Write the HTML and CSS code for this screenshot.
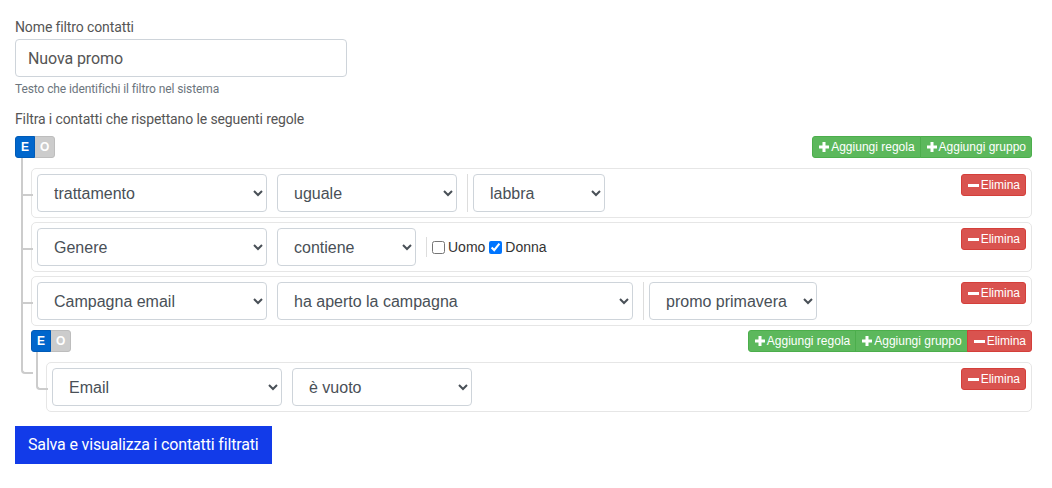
FILE: index.html
```html
<!DOCTYPE html>
<html lang="it">
<head>
<meta charset="utf-8">
<title>Filtro contatti</title>
<link rel="stylesheet" href="styles.css">
</head>
<body>
<div class="page">
  <div class="field">
    <label class="label" for="nome">Nome filtro contatti</label>
    <input id="nome" class="text-input" type="text" value="Nuova promo">
    <div class="help">Testo che identifichi il filtro nel sistema</div>
  </div>
  <div class="label label-rules">Filtra i contatti che rispettano le seguenti regole</div>

  <div class="group">
    <div class="group-header">
      <div class="btn-group">
        <button class="btn btn-cond btn-and">E</button><button class="btn btn-cond btn-or">O</button>
      </div>
      <div class="btn-group">
        <button class="btn btn-success"><svg class="ico-plus" viewBox="0 0 10 10"><rect x="3.5" y="0" width="3" height="10"/><rect x="0" y="3.5" width="10" height="3"/></svg>Aggiungi regola</button><button class="btn btn-success"><svg class="ico-plus" viewBox="0 0 10 10"><rect x="3.5" y="0" width="3" height="10"/><rect x="0" y="3.5" width="10" height="3"/></svg>Aggiungi gruppo</button>
      </div>
    </div>
    <ul class="rules-list rules-root">
      <li>
        <div class="rule">
          <select class="sel w-field"><option>trattamento</option></select>
          <select class="sel w-op"><option>uguale</option></select>
          <div class="value">
            <select class="sel w-labbra"><option>labbra</option></select>
          </div>
          <button class="btn btn-danger btn-del"><svg class="ico-minus" viewBox="0 0 11 3"><rect x="0" y="0" width="11" height="3"/></svg>Elimina</button>
        </div>
      </li>
      <li>
        <div class="rule">
          <select class="sel w-field"><option>Genere</option></select>
          <select class="sel w-contiene"><option>contiene</option></select>
          <div class="value value-checks">
            <label class="check"><input type="checkbox">Uomo</label>
            <label class="check"><input type="checkbox" checked>Donna</label>
          </div>
          <button class="btn btn-danger btn-del"><svg class="ico-minus" viewBox="0 0 11 3"><rect x="0" y="0" width="11" height="3"/></svg>Elimina</button>
        </div>
      </li>
      <li>
        <div class="rule">
          <select class="sel w-field"><option>Campagna email</option></select>
          <select class="sel w-campagna"><option>ha aperto la campagna</option></select>
          <div class="value">
            <select class="sel w-promo"><option>promo primavera</option></select>
          </div>
          <button class="btn btn-danger btn-del"><svg class="ico-minus" viewBox="0 0 11 3"><rect x="0" y="0" width="11" height="3"/></svg>Elimina</button>
        </div>
      </li>
      <li>
        <div class="group">
          <div class="group-header">
            <div class="btn-group">
              <button class="btn btn-cond btn-and">E</button><button class="btn btn-cond btn-or">O</button>
            </div>
            <div class="btn-group">
              <button class="btn btn-success"><svg class="ico-plus" viewBox="0 0 10 10"><rect x="3.5" y="0" width="3" height="10"/><rect x="0" y="3.5" width="10" height="3"/></svg>Aggiungi regola</button><button class="btn btn-success"><svg class="ico-plus" viewBox="0 0 10 10"><rect x="3.5" y="0" width="3" height="10"/><rect x="0" y="3.5" width="10" height="3"/></svg>Aggiungi gruppo</button><button class="btn btn-danger"><svg class="ico-minus" viewBox="0 0 11 3"><rect x="0" y="0" width="11" height="3"/></svg>Elimina</button>
            </div>
          </div>
          <ul class="rules-list">
            <li>
              <div class="rule">
                <select class="sel w-field"><option>Email</option></select>
                <select class="sel w-op"><option>è vuoto</option></select>
                <button class="btn btn-danger btn-del"><svg class="ico-minus" viewBox="0 0 11 3"><rect x="0" y="0" width="11" height="3"/></svg>Elimina</button>
              </div>
            </li>
          </ul>
        </div>
      </li>
    </ul>
  </div>

  <button class="btn-primary">Salva e visualizza i contatti filtrati</button>
</div>
</body>
</html>
```

FILE: styles.css
```css
* { box-sizing: border-box; }

html, body {
  margin: 0;
  background: #fff;
}

body {
  font-family: Roboto, "Liberation Sans", Arial, sans-serif;
  color: #555;
}

.page {
  padding: 17px 20px 0 15px;
}

.field {
  display: flex;
  flex-direction: column;
  align-items: flex-start;
}

.label {
  display: block;
  font-size: 14px;
  line-height: 20px;
  color: #555;
  margin-bottom: 2px;
  letter-spacing: -0.12px;
}

.text-input {
  width: 332px;
  height: 38px;
  padding: 6px 12px;
  border: 1px solid #ced4da;
  border-radius: 4px;
  font-family: Roboto, "Liberation Sans", Arial, sans-serif;
  font-size: 16px;
  color: #555;
  background: #fff;
  outline: none;
  letter-spacing: -0.1px;
}

.help {
  margin-top: 3px;
  font-size: 12px;
  line-height: 18px;
  color: #6c757d;
  letter-spacing: -0.1px;
}

.label-rules {
  margin-top: 11px;
  margin-bottom: 7px;
}

/* ---------- query builder ---------- */
.group {
  display: flex;
  flex-direction: column;
}

.group-header {
  display: flex;
  justify-content: space-between;
  align-items: center;
}

.btn-group {
  display: flex;
}

.btn {
  font-family: "Liberation Sans", Arial, sans-serif;
  font-size: 12px;
  line-height: 18px;
  height: 22px;
  padding: 1px 5px;
  border: 1px solid transparent;
  border-radius: 3px;
  color: #fff;
  cursor: pointer;
  display: inline-flex;
  align-items: center;
  white-space: nowrap;
}

.btn-group .btn {
  border-radius: 0;
}
.btn-group .btn + .btn {
  margin-left: -1px;
}
.btn-group .btn:first-child {
  border-radius: 3px 0 0 3px;
}
.btn-group .btn:last-child {
  border-radius: 0 3px 3px 0;
}

.btn-cond {
  font-weight: bold;
  padding: 1px 5px;
}
.btn-and {
  background: #0066cc;
  border-color: #005bb7;
  position: relative;
  z-index: 1;
}
.btn-or {
  background: #cccccc;
  border-color: #bdbdbd;
}

.btn-success {
  background: #5cb85c;
  border-color: #4cae4c;
}
.btn-danger {
  background: #d9534f;
  border-color: #d43f3a;
}

.ico-plus {
  width: 10px;
  height: 10px;
  fill: #fff;
  margin: 0 2px 0 1px;
}
.ico-minus {
  width: 11px;
  height: 3px;
  fill: #fff;
  margin: 0 2px 0 1px;
}

.rules-list {
  list-style: none;
  margin: 0;
  padding: 10px 0 0 15px;
  display: flex;
  flex-direction: column;
  gap: 4px;
}
.rules-root {
  padding-left: 16px;
}

.rules-list > li {
  position: relative;
}
.rules-list > li::before,
.rules-list > li::after {
  content: '';
  position: absolute;
  left: -10px;
  width: 10px;
  border-color: #ccc;
  border-style: solid;
}
.rules-list > li::before {
  top: -4px;
  height: calc(50% + 5px);
  border-width: 0 0 2px 2px;
}
.rules-list > li::after {
  top: 50%;
  height: 50%;
  border-width: 0 0 0 2px;
}
.rules-list > li:first-child::before {
  top: -10px;
  height: calc(50% + 11px);
}
.rules-list > li:last-child::before {
  border-radius: 0 0 0 4px;
}
.rules-list > li:last-child::after {
  display: none;
}

.rule {
  display: flex;
  align-items: center;
  gap: 10px;
  padding: 5px;
  border: 1px solid #e6e6e6;
  border-radius: 5px;
  background: #fff;
}

.sel {
  height: 38px;
  padding: 6px 8px 6px 12px;
  border: 1px solid #ced4da;
  border-radius: 4px;
  background-color: #fff;
  font-family: "Liberation Sans", Arial, sans-serif;
  font-size: 16px;
  color: #495057;
}

.w-field { width: 230px; }
.w-op { width: 180px; }
.w-contiene { width: 139px; }
.w-labbra { width: 132px; }
.w-campagna { width: 356px; }
.w-promo { width: 168px; }

.value {
  display: flex;
  align-items: center;
  border-left: 1px solid #ddd;
  padding-left: 5px;
}

.value-checks {
  height: 20px;
  font-family: "Liberation Sans", Arial, sans-serif;
  font-size: 14px;
  color: #333;
}

.check {
  display: inline-flex;
  align-items: center;
  margin-right: 4px;
}
.check input {
  margin: 0 3px 0 0;
  width: 13px;
  height: 13px;
}

.btn-del {
  margin-left: auto;
  align-self: flex-start;
}

.btn-primary {
  margin-top: 14px;
  height: 38px;
  padding: 6px 12px;
  border: 1px solid #123be9;
  background: #123be9;
  color: #fff;
  font-family: Roboto, "Liberation Sans", Arial, sans-serif;
  font-size: 16px;
  line-height: 24px;
  letter-spacing: -0.16px;
  border-radius: 0;
  cursor: pointer;
}
```
